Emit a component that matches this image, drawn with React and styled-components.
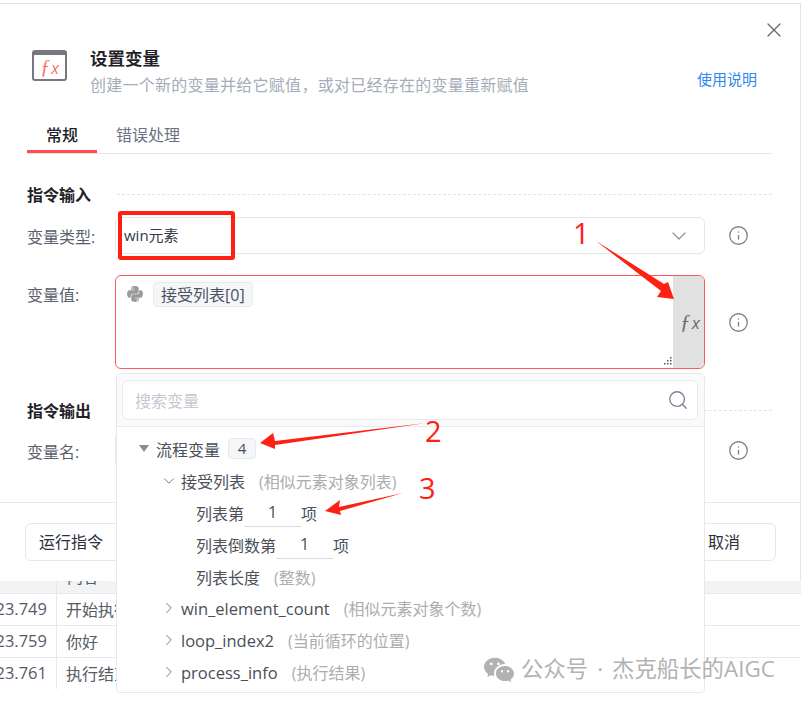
import React from 'react';
import styled, { createGlobalStyle } from 'styled-components';
import { BsWechat } from 'react-icons/bs';
import { FaPython } from 'react-icons/fa';
import { LuChevronDown, LuChevronRight, LuInfo, LuSearch, LuX } from 'react-icons/lu';

const GlobalStyle = createGlobalStyle`
  html, body {
    margin: 0;
    padding: 0;
    background: #fff;
  }
  body {
    font-family: "Open Sans", "Noto Sans CJK SC", sans-serif;
    font-size: 16px;
    color: #1f2329;
  }
  * {
    box-sizing: border-box;
  }
`;

const logRows = [
  { time: '23.749', text: '开始执行' },
  { time: '23.759', text: '你好' },
  { time: '23.761', text: '执行结束' },
];

function App() {
  return (
    <Page>
      <GlobalStyle />
      <Modal>
        <CloseButton><LuX size={24} strokeWidth={1.3} /></CloseButton>
        <Head>
          <IconFrame><IconFx><FxLetter>ƒ</FxLetter>x</IconFx></IconFrame>
          <HeadText>
            <Title>设置变量</Title>
            <Subtitle>创建一个新的变量并给它赋值，或对已经存在的变量重新赋值</Subtitle>
          </HeadText>
          <HelpLink>使用说明</HelpLink>
        </Head>

        <Body>
          <Tabs>
            <Tab $active>常规</Tab>
            <Tab>错误处理</Tab>
          </Tabs>

          <Section $top={29}>
            <SectionName>指令输入</SectionName>
            <DashLine />
          </Section>

          <Row $top={10}>
            <Label>变量类型:</Label>
            <SelectBox>
              <SelectText>win元素</SelectText>
              <LuChevronDown size={24} strokeWidth={1.2} color="#8a919f" />
            </SelectBox>
            <Info><LuInfo size={21} strokeWidth={1.5} /></Info>
          </Row>

          <Row $top={21}>
            <Label>变量值:</Label>
            <ValueBox>
              <ValueMain>
                <PythonIcon size={18} color="#9a9a9a" />
                <Chip>接受列表[0]</Chip>
                <ResizeHandle width="9" height="9" viewBox="0 0 9 9">
                  <rect x="7" y="0" width="1.5" height="1.5" fill="#555" />
                  <rect x="4" y="3" width="1.5" height="1.5" fill="#555" />
                  <rect x="7" y="3" width="1.5" height="1.5" fill="#555" />
                  <rect x="1" y="6" width="1.5" height="1.5" fill="#555" />
                  <rect x="4" y="6" width="1.5" height="1.5" fill="#555" />
                  <rect x="7" y="6" width="1.5" height="1.5" fill="#555" />
                </ResizeHandle>
              </ValueMain>
              <FxPanel><FxLetter>ƒ</FxLetter>x</FxPanel>
            </ValueBox>
            <Info><LuInfo size={21} strokeWidth={1.5} /></Info>
          </Row>

          <Section $top={30}>
            <SectionName>指令输出</SectionName>
            <DashLine />
          </Section>

          <Row $top={9}>
            <Label>变量名:</Label>
            <SelectBox />
            <Info><LuInfo size={21} strokeWidth={1.5} /></Info>
          </Row>
        </Body>

        <Footer>
          <FootButton>运行指令</FootButton>
          <FootButton $cancel>取消</FootButton>
        </Footer>
      </Modal>

      <LogTable>
        <LogHead>
          <TimeCell />
          <HeadCell>内容</HeadCell>
        </LogHead>
        {logRows.map((row) => (
          <LogRow key={row.time}>
            <TimeCell>{row.time}</TimeCell>
            <TextCell>{row.text}</TextCell>
          </LogRow>
        ))}
      </LogTable>

      <Popover>
        <SearchArea>
          <SearchInput>
            <span>搜索变量</span>
            <LuSearch size={22} strokeWidth={1.5} color="#7a8394" />
          </SearchInput>
        </SearchArea>
        <Tree>
          <TreeRow $level={0}>
            <Caret />
            <span>流程变量</span>
            <Badge>4</Badge>
          </TreeRow>
          <TreeRow $level={1}>
            <TreeChevron as={LuChevronDown} size={18} strokeWidth={1.3} />
            <span>接受列表</span>
            <Hint>(相似元素对象列表)</Hint>
          </TreeRow>
          <TreeRow $level={2}>
            <span>列表第</span>
            <IndexInput>1</IndexInput>
            <span>项</span>
          </TreeRow>
          <TreeRow $level={2}>
            <span>列表倒数第</span>
            <IndexInput>1</IndexInput>
            <span>项</span>
          </TreeRow>
          <TreeRow $level={2}>
            <span>列表长度</span>
            <Hint>(整数)</Hint>
          </TreeRow>
          <TreeRow $level={1}>
            <TreeChevron as={LuChevronRight} size={18} strokeWidth={1.3} />
            <VarName>win_element_count</VarName>
            <Hint>(相似元素对象个数)</Hint>
          </TreeRow>
          <TreeRow $level={1}>
            <TreeChevron as={LuChevronRight} size={18} strokeWidth={1.3} />
            <VarName>loop_index2</VarName>
            <Hint>(当前循环的位置)</Hint>
          </TreeRow>
          <TreeRow $level={1}>
            <TreeChevron as={LuChevronRight} size={18} strokeWidth={1.3} />
            <VarName>process_info</VarName>
            <Hint>(执行结果)</Hint>
          </TreeRow>
        </Tree>
      </Popover>

      {/* hand drawn annotations on top of the screenshot */}
      <RedBox />
      <Arrows width="801" height="702" viewBox="0 0 801 702">
        <polygon points="596,241 664,284 668,282 674,299 657,297 661,291" />
        <polygon points="426,423 275,441 273,433 260,443 275,449 275,445" />
        <polygon points="403,493 339,507 340,500 325,511 341,515 340,511" />
      </Arrows>
      <Mark $x={573} $y={213}>1</Mark>
      <Mark $x={425} $y={411}>2</Mark>
      <Mark $x={419} $y={468}>3</Mark>

      <Watermark>
        <BsWechat size={30} color="#b2b2b2" />
        <WaterText>公众号<WaterDot>·</WaterDot>杰克船长的AIGC</WaterText>
      </Watermark>
    </Page>
  );
}

export default App;

const Page = styled.div`
  position: relative;
  width: 801px;
  height: 702px;
  overflow: hidden;
  padding-top: 3px;
  background: #fff;
`;

const Modal = styled.div`
  position: relative;
  height: 578px;
  border-top: 1px solid #e4e4e4;
  border-right: 1px solid #e4e4e4;
  background: #fff;
`;

const CloseButton = styled.div`
  position: absolute;
  top: 14px;
  right: 14px;
  display: flex;
  color: #666;
`;

const Head = styled.div`
  display: flex;
  align-items: flex-start;
  height: 50px;
  padding: 0 43px 0 32px;
  margin-top: 42px;
`;

const IconFrame = styled.div`
  display: flex;
  align-items: center;
  justify-content: center;
  flex: none;
  width: 35px;
  height: 31px;
  margin-top: 4px;
  border: 2px solid #77777f;
  border-top-width: 5px;
  border-radius: 3px;
`;

const IconFx = styled.span`
  font-size: 16px;
  font-style: italic;
  line-height: 20px;
  color: #f4706c;
`;

const FxLetter = styled.span`
  margin-right: 1px;
  font-family: "Liberation Serif", serif;
  font-size: 1.25em;
  font-style: italic;
`;

const HeadText = styled.div`
  flex: 1;
  margin-left: 23px;
`;

const Title = styled.div`
  font-size: 17.5px;
  font-weight: 700;
  line-height: 24px;
  color: #1f2329;
`;

const Subtitle = styled.div`
  margin-top: 3px;
  font-size: 16px;
  line-height: 24px;
  letter-spacing: 0.26px;
  color: #a5acba;
`;

const HelpLink = styled.div`
  margin-top: 21px;
  font-size: 15px;
  line-height: 24px;
  color: #2f88f0;
`;

const Body = styled.div`
  height: 407px;
  padding: 24px 28px 0 27px;
  border-bottom: 1px solid #e8e9ee;
`;

const Tabs = styled.div`
  display: flex;
  border-bottom: 1px solid #e8e8e8;
`;

const Tab = styled.div`
  width: ${(p) => (p.$active ? '70px' : 'auto')};
  height: 33px;
  margin-left: ${(p) => (p.$active ? '0' : '19px')};
  padding-top: 3px;
  border-bottom: ${(p) => (p.$active ? '3px solid #ff4d4f' : '0')};
  text-align: center;
  font-size: 16px;
  line-height: 24px;
  font-weight: ${(p) => (p.$active ? 500 : 400)};
  color: ${(p) => (p.$active ? '#1f2329' : '#6b7280')};
`;

const Section = styled.div`
  display: flex;
  align-items: center;
  height: 24px;
  margin-top: ${(p) => p.$top}px;
`;

const SectionName = styled.div`
  width: 90px;
  padding-bottom: 2px;
  font-size: 16px;
  font-weight: 700;
  color: #1f2329;
`;

const DashLine = styled.div`
  flex: 1;
  margin-top: -2px;
  border-top: 1px dashed #e2e3e6;
`;

const Row = styled.div`
  display: flex;
  align-items: flex-start;
  margin-top: ${(p) => p.$top}px;
`;

const Label = styled.div`
  flex: none;
  width: 88px;
  padding-top: 8px;
  font-size: 16px;
  line-height: 24px;
  color: #5a606c;
`;

const SelectBox = styled.div`
  display: flex;
  flex: none;
  align-items: center;
  justify-content: space-between;
  width: 590px;
  height: 37px;
  padding: 0 13px 0 8px;
  border: 1px solid #e6e7ec;
  border-radius: 6px;
`;

const SelectText = styled.span`
  margin-bottom: 3px;
  font-size: 15px;
  color: #333a45;
`;

const Info = styled.div`
  display: flex;
  flex: none;
  align-items: center;
  justify-content: center;
  align-self: center;
  width: 67px;
  color: #7d828c;
`;

const ValueBox = styled.div`
  display: flex;
  flex: none;
  width: 590px;
  height: 94px;
  border: 1px solid #ff5a58;
  border-radius: 6px;
  overflow: hidden;
`;

const ValueMain = styled.div`
  position: relative;
  flex: 1;
  display: flex;
  align-items: flex-start;
  gap: 9px;
  padding: 6px 0 0 10px;
`;

const PythonIcon = styled(FaPython)`
  margin-top: 3px;
`;

const Chip = styled.div`
  height: 25px;
  padding: 0 7px;
  border: 1px solid #e8eaed;
  border-radius: 4px;
  background: #f5f6f7;
  font-size: 16px;
  line-height: 24px;
  color: #4c525e;
`;

const ResizeHandle = styled.svg`
  position: absolute;
  right: 1px;
  bottom: 2px;
`;

const FxPanel = styled.div`
  display: flex;
  align-items: center;
  justify-content: center;
  flex: none;
  width: 31px;
  padding-left: 3px;
  background: #e1e1e1;
  font-size: 17px;
  font-style: italic;
  color: #6a6a6a;
`;

const Footer = styled.div`
  display: flex;
  justify-content: space-between;
  padding: 20px 24px 0 25px;
`;

const FootButton = styled.div`
  width: ${(p) => (p.$cancel ? '104px' : '115px')};
  height: 38px;
  padding-left: ${(p) => (p.$cancel ? '0' : '13px')};
  border: 1px solid #e6e7ec;
  border-radius: 6px;
  font-size: 16px;
  line-height: 36px;
  text-align: ${(p) => (p.$cancel ? 'center' : 'left')};
  color: #2b303a;
`;

const LogTable = styled.div`
  border-top: 0;
`;

const LogHead = styled.div`
  display: flex;
  height: 12px;
  overflow: hidden;
  background: #f2f3f5;
`;

const LogRow = styled.div`
  display: flex;
  height: 32px;
  border-top: 1px solid #e8e9ee;
`;

const TimeCell = styled.div`
  flex: none;
  display: flex;
  justify-content: flex-end;
  width: 57px;
  padding-right: 9px;
  border-right: 1px solid #e8e9ee;
  font-size: 16.5px;
  line-height: 30px;
  color: #555b66;
`;

const HeadCell = styled.div`
  display: flex;
  align-items: flex-end;
  padding: 0 0 8px 10px;
  font-size: 16px;
  line-height: 16px;
  color: #555b66;
`;

const TextCell = styled.div`
  padding-left: 9px;
  font-size: 16px;
  line-height: 33px;
  color: #555b66;
`;

const Popover = styled.div`
  position: absolute;
  left: 116px;
  top: 373px;
  width: 589px;
  height: 320px;
  border: 1px solid #e8e9ee;
  border-radius: 4px;
  background: #fff;
`;

const SearchArea = styled.div`
  height: 53px;
  padding: 6px 6px 0 5px;
  border-bottom: 1px solid #e8e9ee;
  background: #fafafa;
`;

const SearchInput = styled.div`
  display: flex;
  align-items: center;
  justify-content: space-between;
  height: 40px;
  padding: 0 8px 1px 12px;
  border: 1px solid #e8e9ee;
  border-radius: 6px;
  background: #fff;
  font-size: 16px;
  color: #c4c8d0;
`;

const Tree = styled.div`
  padding-top: 6px;
`;

const TreeRow = styled.div`
  display: flex;
  align-items: center;
  height: 31.9px;
  padding-left: ${(p) => [22, 43, 79][p.$level]}px;
  font-size: 16px;
  color: #4a4f59;
`;

const TreeChevron = styled.svg`
  flex: none;
  margin-right: 3px;
  color: #777;
`;

const Caret = styled.span`
  width: 0;
  height: 0;
  margin-right: 7px;
  border-left: 5px solid transparent;
  border-right: 5px solid transparent;
  border-top: 7px solid #868e9c;
`;

const Badge = styled.span`
  width: 28px;
  height: 21px;
  margin-left: 8px;
  border: 1px solid #e8eaed;
  border-radius: 4px;
  background: #f5f6f7;
  text-align: center;
  font-size: 15px;
  line-height: 19px;
`;

const VarName = styled.span`
  font-size: 16.5px;
`;

const Hint = styled.span`
  margin-left: 14px;
  color: #adadad;
`;

const IndexInput = styled.span`
  width: 57px;
  height: 28px;
  margin-top: 1px;
  border-bottom: 1px solid #dcdcdc;
  text-align: center;
  line-height: 26px;
`;

const RedBox = styled.div`
  position: absolute;
  left: 118px;
  top: 211px;
  width: 117px;
  height: 49px;
  border: 4px solid #ff2014;
  border-radius: 3px;
`;

const Arrows = styled.svg`
  position: absolute;
  left: 0;
  top: 0;
  fill: #ff2014;
  pointer-events: none;
`;

const Mark = styled.span`
  position: absolute;
  left: ${(p) => p.$x}px;
  top: ${(p) => p.$y}px;
  font-size: 29px;
  line-height: 40px;
  color: #ff2014;
`;

const Watermark = styled.div`
  position: absolute;
  left: 484px;
  top: 653px;
  display: flex;
  align-items: center;
  gap: 7px;
  white-space: nowrap;
`;

const WaterText = styled.span`
  font-size: 22.4px;
  line-height: 32px;
  color: #b2b2b2;
`;

const WaterDot = styled.span`
  margin: 0 9px;
`;
